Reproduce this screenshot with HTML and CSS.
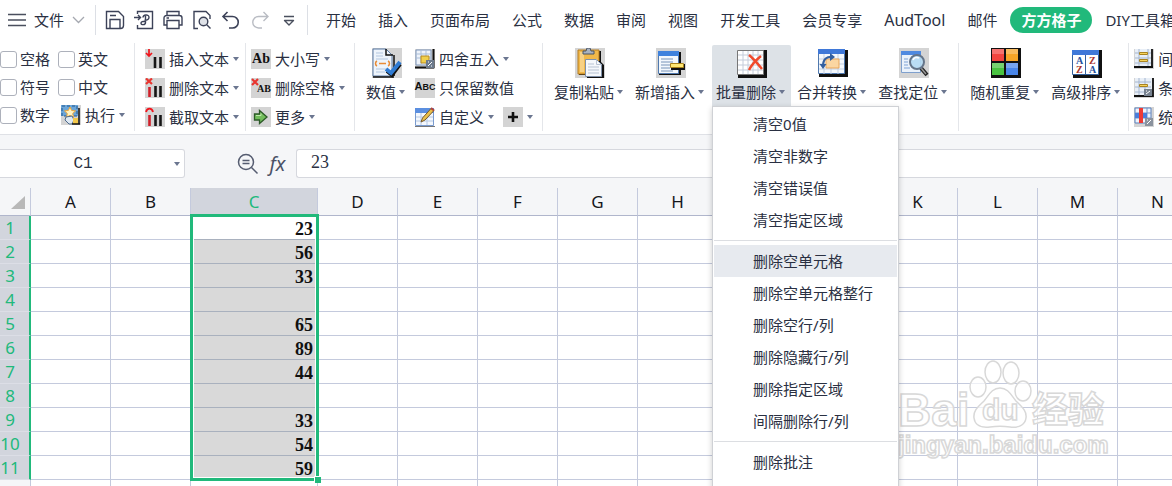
FILE: index.html
```html
<!DOCTYPE html>
<html lang="zh-CN">
<head>
    <meta charset="UTF-8">
    <meta name="viewport" content="width=device-width, initial-scale=1.0">
    <title>表格</title>
    <link rel="stylesheet" href="styles.css">
</head>
<body>
    <header class="menubar">
        <button class="file-btn">
            <svg width="18" height="14" viewBox="0 0 18 14" fill="none" stroke="#4a4f5e" stroke-width="1.3"><path d="M0 1.5h18M0 7h18M0 12.5h18"/></svg>
            文件
            <svg width="13" height="8" viewBox="0 0 13 8" fill="none" stroke="#a5a8b0" stroke-width="1.3"><path d="M1 1l5.5 5.5L12 1"/></svg>
        </button>
        <div class="quick">
            <button aria-label="保存"><svg width="20" height="20" viewBox="0 0 20 20" fill="none" stroke="#3c4258" stroke-width="1.4"><path d="M1.5 1.5h12l5 5v9a3 3 0 0 1-3 3h-14zM5 18V9.500h10V18M5 5.500h6"/></svg></button>
            <button aria-label="输出为PDF"><svg width="20" height="20" viewBox="0 0 20 20" fill="none" stroke="#3c4258" stroke-width="1.4"><path d="M3.500 4V1.500h15v17h-15V15M0 7.500h6.500M4 5l2.500 2.500L4 10"/><path d="M9 7.500c0-3 6-3.500 6-.3 0 3-4.500 3-4.500 3M11.500 6v6.500c0 3-4.500 2.500-4.500.8 0-2 4-2 4-2"/></svg></button>
            <button aria-label="打印"><svg width="20" height="20" viewBox="0 0 20 20" fill="none" stroke="#3c4258" stroke-width="1.4"><path d="M4 5V1.500h12V5M4 15H1V8a2.500 2.500 0 0 1 2.500-2.500h13A2.500 2.500 0 0 1 19 8v7h-3M4 10.500h12v8H4zM3.500 8H6"/></svg></button>
            <button aria-label="打印预览"><svg width="20" height="20" viewBox="0 0 20 20" fill="none" stroke="#3c4258" stroke-width="1.4"><path d="M6 18.500H2v-17h12l4 4V9"/><circle cx="11.500" cy="11.500" r="4.300" fill="#dfe2e8"/><path d="M14.800 14.800l3.700 3.700"/></svg></button>
            <button aria-label="撤销"><svg width="20" height="20" viewBox="0 0 20 20" fill="none" stroke="#3c4258" stroke-width="1.6"><path d="M6.500 2L2 6.500 6.500 11M2 6.500h9.500a5.700 5.700 0 0 1 0 11.500H8"/></svg></button>
            <button aria-label="恢复"><svg width="20" height="20" viewBox="0 0 20 20" fill="none" stroke="#b9bcc3" stroke-width="1.4"><path d="M13.500 2L18 6.500 13.500 11M18 6.500H8.500a5.700 5.700 0 0 0 0 11.500H12"/></svg></button>
            <button aria-label="更多命令"><svg width="20" height="20" viewBox="0 0 20 20" fill="none" stroke="#4a4f5e" stroke-width="1.4"><path d="M5 6.500h10M5.500 10.500h9L10 15z" stroke-linejoin="round"/></svg></button>
        </div>
        <nav class="tabs">
            <a href="#">开始</a>
            <a href="#">插入</a>
            <a href="#">页面布局</a>
            <a href="#">公式</a>
            <a href="#">数据</a>
            <a href="#">审阅</a>
            <a href="#">视图</a>
            <a href="#">开发工具</a>
            <a href="#">会员专享</a>
            <a href="#" class="latin">AudTool</a>
            <a href="#">邮件</a>
            <a href="#" class="active">方方格子</a>
            <a href="#">DIY工具箱</a>
        </nav>
    </header>

    <section class="ribbon">
        <div class="group checks">
            <label><input type="checkbox">空格</label>
            <label><input type="checkbox">英文</label>
            <label><input type="checkbox">符号</label>
            <label><input type="checkbox">中文</label>
            <label><input type="checkbox">数字</label>
            <button class="tool run">
                <svg width="20" height="20" viewBox="0 0 20 20"><rect width="20" height="20" fill="#d4d4d4"/><path d="M0 0h17v11H0z" fill="#6ba5d8"/><path d="M1 1h15v10H1z" fill="none" stroke="#24588e" stroke-dasharray="3 2"/><path d="M9 2l1.700 3.500 3.800.4-2.800 2.600.8 3.800L9 10.400l-3.500 1.900.8-3.800-2.800-2.600 3.800-.4z" fill="#fff3c4" stroke="#f0a634"/><path d="M5 12l6-1 2 4-2 4H8l-4-4z" fill="#dfe9f3" stroke="#4d6a8c"/><path d="M12 13h5v6h-5z" fill="#f3c84b"/><path d="M18 3v16M11 19h8" stroke="#111" stroke-width="1.500"/></svg>
                执行<i class="caret"></i>
            </button>
        </div>

        <div class="group text-group">
            <button class="tool">
                <svg width="20" height="20" viewBox="0 0 20 20"><rect width="20" height="20" fill="#d4d4d4"/><path d="M4 0v6M1 4l3 3 3-3" fill="none" stroke="#f0151c" stroke-width="1.700"/><path d="M10 8v11M15.500 8v11" stroke="#161616" stroke-width="2.600"/></svg>
                插入文本<i class="caret"></i>
            </button>
            <button class="tool">
                <svg width="20" height="20" viewBox="0 0 20 20"><rect width="20" height="20" fill="#d4d4d4"/><path d="M1 .5l6 5.500M7 .5L1 6" stroke="#e8352f" stroke-width="2.200"/><path d="M4.500 9v10" stroke="#d0202a" stroke-width="2.600"/><path d="M10.500 8v11M15.500 8v11" stroke="#161616" stroke-width="2.600"/></svg>
                删除文本<i class="caret"></i>
            </button>
            <button class="tool">
                <svg width="20" height="20" viewBox="0 0 20 20"><rect width="20" height="20" fill="#d4d4d4"/><path d="M1 5c1-4.500 6-4.500 7 0" fill="none" stroke="#f0151c" stroke-width="1.800"/><path d="M4.500 8v11" stroke="#d0202a" stroke-width="2.600"/><path d="M10.500 8v11M15.500 8v11" stroke="#161616" stroke-width="2.600"/></svg>
                截取文本<i class="caret"></i>
            </button>
        </div>

        <div class="group case-group">
            <button class="tool">
                <span class="glyph">Ab</span>
                大小写<i class="caret"></i>
            </button>
            <button class="tool">
                <span class="glyph small"><svg width="8" height="8" viewBox="0 0 8 8"><path d="M1 1l6 6M7 1L1 7" stroke="#e8352f" stroke-width="2.200"/></svg>AB</span>
                删除空格<i class="caret"></i>
            </button>
            <button class="tool">
                <svg width="20" height="20" viewBox="0 0 20 20"><rect width="20" height="20" fill="#d4d4d4"/><path d="M3.500 7h5V3.500L16 10l-7.500 6.500V13h-5z" fill="#72bd5b" stroke="#2d5a28" stroke-width="1.300"/><path d="M5 8.500h5V6.500" fill="none" stroke="#c0e8ac"/></svg>
                更多<i class="caret"></i>
            </button>
        </div>

        <div class="group value-group">
            <button class="big">
                <svg width="30" height="30" viewBox="0 0 30 30"><rect width="30" height="30" fill="#d4d4d4"/><path d="M1 1h13l6 6v21H1z" fill="#eef4fb" stroke="#5b7aa5"/><path d="M14 1v6h7M22 7v21M1 29h21" fill="none" stroke="#111" stroke-width="1.500"/><path d="M4 5h7M4 8h7M4 11h12M4 21h10M4 24h9" stroke="#b2c6df"/><path d="M5 13c-2 1-2 4 0 5M16 13c2 1 2 4 0 5M7 15.500h7" fill="none" stroke="#e98b35" stroke-width="1.500"/><path d="M15 23l5 4 8-11" fill="none" stroke="#111" stroke-width="4"/><path d="M14 21l5 4 9-11" fill="none" stroke="#2f7bd3" stroke-width="4"/></svg>
                <span>数值<i class="caret"></i></span>
            </button>
            <div class="stack">
                <button class="tool">
                    <svg width="20" height="20" viewBox="0 0 20 20"><rect width="20" height="20" fill="#d4d4d4"/><path d="M1 1h15v15H1z" fill="#eef3fa" stroke="#7e97bb"/><path d="M1 5h15M1 9h15M6 1v15M11 1v15" stroke="#a9bdd8"/><path d="M6 7h8v7H6z" fill="#f0cf4b" stroke="#b58a23"/><path d="M0 18.500h19M18.500 0v19" stroke="#111" stroke-width="2"/><rect x="11" y="11" width="8" height="8" fill="#6d7b8d"/><path d="M13 17l4-4M13 13h1M16 17h1" stroke="#fff"/></svg>
                    四舍五入<i class="caret"></i>
                </button>
                <button class="tool">
                    <span class="glyph abc">A<small>BC</small></span>
                    只保留数值
                </button>
                <div class="pair">
                    <button class="tool">
                        <svg width="20" height="20" viewBox="0 0 20 20"><path d="M.5 1.500h18v17H.5z" fill="#f4f8fd" stroke="#7a9bcf"/><path d="M0 1h19v5H0z" fill="#5b8fe0"/><path d="M1 10h17M1 14h17M6 6v12M12 6v12" stroke="#b5c8e4"/><path d="M6 15l1.500-4L16 1.500l3 2L10 13z" fill="#e9c04a" stroke="#76592b"/><path d="M16 1l3 2.500" stroke="#b4433c" stroke-width="2"/><path d="M0 19.500h20" stroke="#777"/></svg>
                        自定义<i class="caret"></i>
                    </button>
                    <button class="tool" aria-label="添加">
                        <svg width="20" height="20" viewBox="0 0 20 20"><rect width="20" height="20" fill="#d4d4d4"/><path d="M10 5v10M5 10h10" stroke="#111" stroke-width="2.600"/></svg>
                        <i class="caret"></i>
                    </button>
                </div>
            </div>
        </div>

        <div class="group edit-group">
            <button class="big">
                <svg width="30" height="30" viewBox="0 0 30 30"><rect width="30" height="30" fill="#d4d4d4"/><path d="M4 3h22v24H4z" fill="#111"/><path d="M3 2h21v24H3z" fill="#f1b84a" stroke="#b57d20"/><path d="M5 4h4v20H5z" fill="#f8d184"/><path d="M8 6V3h3l1-3h3l1 3h3v3z" fill="#a9b2bf" stroke="#4b5563"/><path d="M12 13h13l4 4v13H12z" fill="#111"/><path d="M10.500 11.500h11l5 5v12h-16z" fill="#f5f8fc" stroke="#7f90a8"/><path d="M21.500 11.500v5h5M13 16h6M13 19h11M13 22h11M13 25h11" fill="none" stroke="#b8c3d3"/></svg>
                <span>复制粘贴<i class="caret"></i></span>
            </button>
            <button class="big">
                <svg width="30" height="30" viewBox="0 0 30 30"><rect width="30" height="30" fill="#d4d4d4"/><path d="M3 4h22v23H3z" fill="#111"/><path d="M2.500 3.500h20v22h-20z" fill="#f3f8fd" stroke="#5079ae"/><path d="M2 3h21v5H2z" fill="#3f82dd"/><path d="M5 11h12M5 14h12M5 17h9M5 20h9M5 23h12" stroke="#7793b8"/><path d="M15 16h14v6H15z" fill="#111"/><path d="M14.500 15.500h13v4h-13z" fill="#ffe873" stroke="#a8811c"/></svg>
                <span>新增插入<i class="caret"></i></span>
            </button>
            <div class="dropdown">
                <button class="big open">
                    <svg width="30" height="30" viewBox="0 0 30 30"><path d="M1 2h29v28H1z" fill="#111"/><path d="M.5 2.500h26v24H.5z" fill="#fff" stroke="#777"/><path d="M1 7h25M1 12h25M1 17h25M1 22h25M6 3v23M11 3v23M16 3v23M21 3v23" stroke="#c4ccda"/><path d="M12 7c5 4 9 9 13 14M24 8c-5 4-9 8-12 14" fill="none" stroke="#f04a2c" stroke-width="2.500"/></svg>
                    <span>批量删除<i class="caret"></i></span>
                </button>
                <div class="menu">
                    <button>清空0值</button>
                    <button>清空非数字</button>
                    <button>清空错误值</button>
                    <button>清空指定区域</button>
                    <hr>
                    <button class="hover">删除空单元格</button>
                    <button>删除空单元格整行</button>
                    <button>删除空行/列</button>
                    <button>删除隐藏行/列</button>
                    <button>删除指定区域</button>
                    <button>间隔删除行/列</button>
                    <hr>
                    <button>删除批注</button>
                </div>
            </div>
            <button class="big">
                <svg width="30" height="30" viewBox="0 0 30 30"><path d="M1 2h29v27H1z" fill="#111"/><path d="M.5 1.500h26v24H.5z" fill="#f4f8fd" stroke="#5079ae"/><path d="M0 1h27v5H0z" fill="#3f78d8"/><path d="M1 11h25M1 16h25M1 21h25M6 6v20M13 6v20M20 6v20" stroke="#c2cfe2"/><path d="M8 11h13v9H8z" fill="#fbd6a2" stroke="#e8a65a"/><path d="M5 18c0-7 4-10 10-9" fill="none" stroke="#335f9f" stroke-width="2.200"/><path d="M12 5l5 4-5 4zM1.500 16h7L5 21z" fill="#335f9f"/></svg>
                <span>合并转换<i class="caret"></i></span>
            </button>
            <button class="big">
                <svg width="30" height="30" viewBox="0 0 30 30"><rect width="30" height="30" fill="#d4d4d4"/><path d="M2.500 3.500h19v21h-19z" fill="#eaf2fb" stroke="#7fa0cd"/><path d="M2 3h20v4H2z" fill="#4f8ae0"/><path d="M5 11h4M5 14h4M5 17h4M5 20h6" stroke="#7fa3d5"/><path d="M22 20l6 7" stroke="#222" stroke-width="4"/><path d="M22 20l5 6" stroke="#999" stroke-width="1.500"/><circle cx="18" cy="14" r="7" fill="#b5daf3" fill-opacity=".9" stroke="#657589" stroke-width="2"/><path d="M14 12c1-3 4-3 6-2" fill="none" stroke="#fff" stroke-width="1.500"/></svg>
                <span>查找定位<i class="caret"></i></span>
            </button>
        </div>

        <div class="group sort-group">
            <button class="big">
                <svg width="30" height="30" viewBox="0 0 30 30"><path d="M0 0h30v30H0z" fill="#111"/><path d="M1 1h12v12H1z" fill="#f2453f"/><path d="M15 1h12v12H15z" fill="#f7a528"/><path d="M1 15h12v12H1z" fill="#4ac341"/><path d="M15 15h12v12H15z" fill="#4a86e8"/><path d="M1 1h12v5H1zM15 1h12v5H15zM1 15h12v5H1zM15 15h12v5H15z" fill="#fff" fill-opacity=".25"/></svg>
                <span>随机重复<i class="caret"></i></span>
            </button>
            <button class="big">
                <svg class="az" width="30" height="30" viewBox="0 0 30 30"><path d="M1 2h29v28H1z" fill="#111"/><path d="M.5 2.500h26v24H.5z" fill="#fff" stroke="#35629f"/><path d="M0 2h27v5H0z" fill="#3f78d8"/><path d="M13.500 7v20" stroke="#35629f"/><text x="4" y="16" fill="#25509c">A</text><text x="4" y="25" fill="#a8332d">Z</text><text x="17" y="16" fill="#a8332d">Z</text><text x="17" y="25" fill="#25509c">A</text></svg>
                <span>高级排序<i class="caret"></i></span>
            </button>
        </div>

        <div class="group last-group">
            <button class="tool">
                <svg width="20" height="20" viewBox="0 0 20 20"><rect width="20" height="20" fill="#d4d4d4"/><path d="M1 0h17v17H1z" fill="#e9eff7"/><path d="M1 4h16M1 9h16M1 14h16M5 0v17M14 0v17" stroke="#a5b6cf"/><path d="M5.500 3.500h8v2h-8zM5.500 10.500h8v2h-8z" fill="#f6d45c" stroke="#a98322"/><path d="M0 18h19M18 0v19" stroke="#111" stroke-width="1.800"/></svg>
                间隔
            </button>
            <button class="tool">
                <svg width="20" height="20" viewBox="0 0 20 20"><rect width="20" height="20" fill="#d4d4d4"/><path d="M1 0h17v17H1z" fill="#e9eff7"/><path d="M1 4h16M1 9h16M1 14h16M5 0v17M11 0v17" stroke="#a5b6cf"/><path d="M5.500 6.500h8v2h-8z" fill="#f6d45c" stroke="#a98322"/><path d="M0 18h19M19 0v19" stroke="#111" stroke-width="1.800"/><path d="M10 11h8v7h-8z" fill="#76818f"/><path d="M12 16l4-3M12 13h1" stroke="#fff"/></svg>
                条件
            </button>
            <button class="tool">
                <svg width="20" height="20" viewBox="0 0 20 20"><rect width="20" height="20" fill="#d4d4d4"/><path d="M1 1h16v15H1z" fill="#edf2fa" stroke="#5a80bd"/><path d="M1 6h16M1 11h16M13 1v15" stroke="#7294c8"/><path d="M5 1h4v15H5z" fill="#ee3a34"/><path d="M9 6h4v5H9zM1 6h4v5H1z" fill="#4a7edb"/><path d="M11 11h8v8h-8z" fill="#8a929d"/><path d="M13 17l4-4M13 13h1" stroke="#fff"/></svg>
                统计
            </button>
        </div>
    </section>

    <section class="formula-bar">
        <div class="name-box">
            <input type="text" value="C1" aria-label="名称框">
            <button aria-label="展开名称"><i class="caret"></i></button>
        </div>
        <button class="lookup" aria-label="浏览公式"><svg width="22" height="22" viewBox="0 0 22 22" fill="none" stroke="#555c70" stroke-width="1.500"><circle cx="9" cy="9" r="7.500"/><path d="M14.500 14.500l6 6M5.500 7.500h7M5.500 10.500h7"/></svg></button>
        <button class="fx">fx</button>
        <input class="formula" type="text" value="23" aria-label="编辑栏">
    </section>

    <main class="sheet">
        <table>
            <colgroup>
                <col class="col-head"><col><col><col class="col-c">
                <col><col><col><col><col><col><col><col><col><col><col>
            </colgroup>
            <thead>
                <tr>
                    <th class="corner"><svg width="14" height="13" viewBox="0 0 14 13"><path d="M14 0v13H0z" fill="#b8b8b8"/></svg></th>
                    <th>A</th><th>B</th><th class="on">C</th><th>D</th><th>E</th><th>F</th><th>G</th><th>H</th><th>I</th><th>J</th><th>K</th><th>L</th><th>M</th><th>N</th>
                </tr>
            </thead>
            <tbody>
                <tr class="sel first"><th>1</th><td></td><td></td><td class="c">23<div class="selection"></div></td><td></td><td></td><td></td><td></td><td></td><td></td><td></td><td></td><td></td><td></td><td></td></tr>
                <tr class="sel"><th>2</th><td></td><td></td><td class="c">56</td><td></td><td></td><td></td><td></td><td></td><td></td><td></td><td></td><td></td><td></td><td></td></tr>
                <tr class="sel"><th>3</th><td></td><td></td><td class="c">33</td><td></td><td></td><td></td><td></td><td></td><td></td><td></td><td></td><td></td><td></td><td></td></tr>
                <tr class="sel"><th>4</th><td></td><td></td><td class="c"></td><td></td><td></td><td></td><td></td><td></td><td></td><td></td><td></td><td></td><td></td><td></td></tr>
                <tr class="sel"><th>5</th><td></td><td></td><td class="c">65</td><td></td><td></td><td></td><td></td><td></td><td></td><td></td><td></td><td></td><td></td><td></td></tr>
                <tr class="sel"><th>6</th><td></td><td></td><td class="c">89</td><td></td><td></td><td></td><td></td><td></td><td></td><td></td><td></td><td></td><td></td><td></td></tr>
                <tr class="sel"><th>7</th><td></td><td></td><td class="c">44</td><td></td><td></td><td></td><td></td><td></td><td></td><td></td><td></td><td></td><td></td><td></td></tr>
                <tr class="sel"><th>8</th><td></td><td></td><td class="c"></td><td></td><td></td><td></td><td></td><td></td><td></td><td></td><td></td><td></td><td></td><td></td></tr>
                <tr class="sel"><th>9</th><td></td><td></td><td class="c">33</td><td></td><td></td><td></td><td></td><td></td><td></td><td></td><td></td><td></td><td></td><td></td></tr>
                <tr class="sel"><th>10</th><td></td><td></td><td class="c">54</td><td></td><td></td><td></td><td></td><td></td><td></td><td></td><td></td><td></td><td></td><td></td></tr>
                <tr class="sel"><th>11</th><td></td><td></td><td class="c">59</td><td></td><td></td><td></td><td></td><td></td><td></td><td></td><td></td><td></td><td></td><td></td></tr>
                <tr><th>12</th><td></td><td></td><td></td><td></td><td></td><td></td><td></td><td></td><td></td><td></td><td></td><td></td><td></td><td></td></tr>
            </tbody>
        </table>
        <svg class="watermark" width="212" height="106" viewBox="0 0 212 106">
            <text class="mark" x="0" y="69" font-size="46">Bai</text>
            <ellipse cx="80" cy="30" rx="8" ry="10"/>
            <ellipse cx="95" cy="15" rx="8" ry="11"/>
            <ellipse cx="113" cy="16" rx="8" ry="11"/>
            <ellipse cx="125" cy="34" rx="8" ry="10"/>
            <path d="M102 31c8 0 11 7 16 13 6 6 11 10 10 17-1 8-9 10-16 9-7-1-13-1-20 0-8 1-15-1-16-9-1-8 5-12 10-17 5-6 8-13 16-13z"/>
            <text class="mark" x="84" y="63" font-size="30">du</text>
            <text class="mark" x="134" y="66" font-size="36">经验</text>
            <text class="mark" x="0" y="96" font-size="24">jingyan.baidu.com</text>
        </svg>
    </main>
</body>
</html>
```
FILE: styles.css
```css
* {
    box-sizing: border-box;
}
body {
    margin: 0;
    height: 100vh;
    overflow: hidden;
    display: flex;
    flex-direction: column;
    font-family: "Noto Sans", "Noto Sans CJK SC", sans-serif;
    font-size: 15px;
    line-height: 20px;
    color: #2a3042;
    background: #fff;
}
button, input {
    font: inherit;
    color: inherit;
}
button {
    padding: 0;
    border: none;
    background: none;
    white-space: nowrap;
}
svg {
    flex: none;
    display: block;
}
.caret {
    display: inline-block;
    border-left: 3px solid transparent;
    border-right: 3px solid transparent;
    border-top: 4px solid #6b7690;
}

/* menu bar */
.menubar {
    display: flex;
    align-items: center;
    height: 40px;
    flex: none;
}
.file-btn {
    display: flex;
    align-items: center;
    gap: 8px;
    padding: 0 10px 0 8px;
    height: 30px;
    border-right: 1px solid #dcdfe5;
}
.quick {
    display: flex;
    align-items: center;
    gap: 9px;
    padding: 0 8px 0 9px;
    height: 30px;
    border-right: 1px solid #dcdfe5;
}
.tabs {
    display: flex;
    align-items: center;
    padding-left: 7px;
    white-space: nowrap;
}
.tabs a {
    padding: 3px 11px;
    color: inherit;
    text-decoration: none;
}
.tabs .latin {
    font-size: 16px;
}
.tabs .active {
    margin: 0 2px;
    border-radius: 13px;
    background: #21b97b;
    color: #fff;
    font-weight: bold;
}

/* ribbon */
.ribbon {
    display: flex;
    flex: none;
    padding: 3px 0;
    border-bottom: 1px solid #dfe1e6;
}
.group {
    display: flex;
    flex: none;
    height: 88px;
    border-right: 1px solid #e4e6ea;
}
.checks {
    display: grid;
    grid-template-columns: 58px 76px;
    grid-auto-rows: 20px;
    row-gap: 8px;
    padding-top: 6px;
}
.checks label {
    display: flex;
    align-items: center;
    gap: 3px;
}
.checks input {
    appearance: none;
    width: 17px;
    height: 17px;
    margin: 0;
    border: 1px solid #adb1bb;
    border-radius: 3px;
    background: #fff;
}
.run {
    padding-left: 3px;
}
.text-group, .case-group, .last-group, .stack {
    flex-direction: column;
    gap: 9px;
    padding-top: 6px;
}
.text-group {
    padding-left: 10px;
    padding-right: 6px;
}
.case-group {
    padding-left: 5px;
    padding-right: 9px;
}
.last-group {
    padding-left: 5px;
    border-right: none;
}
.value-group {
    padding-left: 7px;
    padding-right: 9px;
    gap: 4px;
}
.stack, .pair {
    display: flex;
}
.pair {
    gap: 9px;
}
.tool {
    display: flex;
    align-items: center;
    gap: 4px;
    height: 20px;
}
.glyph {
    display: flex;
    align-items: center;
    justify-content: center;
    width: 20px;
    height: 20px;
    background: #d4d4d4;
    color: #111;
    font: bold 14px "Liberation Serif", serif;
}
.glyph.small {
    position: relative;
    justify-content: flex-end;
    font-size: 10px;
}
.glyph.small svg {
    position: absolute;
    left: 0;
    top: 0;
}
.glyph.abc {
    align-items: baseline;
    font: bold 11px/17px "Liberation Sans", sans-serif;
}
.abc small {
    font-size: 9px;
}
.edit-group, .sort-group {
    gap: 2px;
    padding-left: 7px;
    padding-right: 2px;
}
.edit-group {
    padding-right: 5px;
}
.big {
    display: flex;
    flex-direction: column;
    align-items: center;
    gap: 4px;
    height: 62px;
    margin-top: 2px;
    padding: 3px 4px 0;
    border-radius: 2px 2px 0 0;
}
.big span {
    display: flex;
    align-items: center;
    gap: 3px;
    padding-right: 2px;
}
.big.open {
    background: #dde2e7;
}
.az text {
    font: bold 10px "Liberation Serif", serif;
}

/* drop-down menu */
.dropdown {
    position: relative;
}
.menu {
    position: absolute;
    z-index: 10;
    top: 63px;
    left: 0;
    width: 187px;
    height: 400px;
    padding: 1px;
    background: #fff;
    border: 1px solid #cfd1d5;
    box-shadow: 0 2px 6px rgba(0, 0, 0, 0.2);
}
.menu button {
    display: block;
    width: 100%;
    height: 32px;
    padding-left: 39px;
    text-align: left;
}
.menu .hover {
    background: #e7eaef;
}
.menu hr {
    margin: 4px 0;
    border: none;
    border-top: 1px solid #dcdee2;
}

/* formula bar */
.formula-bar {
    display: flex;
    align-items: center;
    flex: none;
    padding: 14px 0 10px;
    background: #f5f6f8;
}
.name-box {
    display: flex;
    align-items: center;
    width: 185px;
    height: 29px;
    margin-right: 52px;
    padding-right: 4px;
    background: #fff;
    border: 1px solid #d6d8de;
    border-left: none;
    border-radius: 0 3px 3px 0;
}
.name-box input {
    flex: 1;
    min-width: 0;
    padding: 0 8px 0 0;
    border: none;
    text-align: center;
    font-family: "Liberation Mono", monospace;
    font-size: 16px;
}
.name-box button {
    display: flex;
}
.fx {
    width: 37px;
    font-style: italic;
    font-size: 20px;
    color: #4a5166;
}
.formula {
    flex: 1;
    min-width: 0;
    height: 29px;
    padding: 0 14px 3px;
    border: 1px solid #d6d8de;
    border-right: none;
    border-radius: 3px 0 0 3px;
    background: #fff;
    font-family: "Liberation Serif", serif;
    font-size: 18px;
}

/* sheet */
.sheet {
    position: relative;
    flex: 1;
    min-height: 0;
    overflow: hidden;
}
table {
    width: 1198px;
    table-layout: fixed;
    border-collapse: separate;
    border-spacing: 0;
}
.col-head {
    width: 31px;
}
.col-c {
    width: 127px;
}
th, td {
    height: 24px;
    padding: 0;
    border-right: 1px solid #c4cadd;
    border-bottom: 1px solid #c4cadd;
}
th {
    font-weight: normal;
    font-size: 17px;
    line-height: 22px;
    color: #15171c;
    background: #f5f6f8;
}
thead th {
    height: 28px;
    border-bottom-color: #b0b6cc;
}
thead .on {
    background: #d2d5dd;
    color: #21b97b;
}
.corner svg {
    margin: 2px 0 0 11px;
}
tbody th {
    padding-right: 10px;
}
.sel th {
    background: #d2d5dd;
    color: #21b97b;
    border-right: 2px solid #21b97b;
    border-bottom-color: #dcdee6;
    padding-right: 9px;
}
.c {
    position: relative;
    padding: 3px 4px 0 0;
    text-align: right;
    font: bold 18px/20px "Liberation Serif", serif;
    color: #111;
    background: #d9d9d9;
    border-bottom-color: #a9b1be;
}
.first .c {
    background: #fff;
}
.selection {
    position: absolute;
    z-index: 2;
    top: -2px;
    left: -1px;
    right: -2px;
    height: 267px;
    border: 3px solid #21b97b;
    box-shadow: inset 0 0 0 1px #fff;
}
.selection::after {
    content: "";
    position: absolute;
    right: -5px;
    bottom: -5px;
    width: 6px;
    height: 6px;
    background: #21b97b;
    border-left: 1px solid #fff;
    border-top: 1px solid #fff;
}

.watermark {
    position: absolute;
    right: 62px;
    bottom: 23px;
    fill: rgba(255, 255, 255, 0.7);
    stroke: #d8d8d8;
    stroke-width: 1.5;
}
.mark {
    font-family: "Liberation Sans", "Noto Sans CJK SC", sans-serif;
    font-weight: bold;
}
```
